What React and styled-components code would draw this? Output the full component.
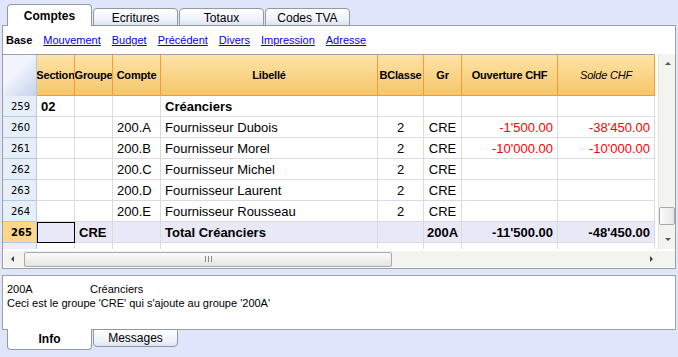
import React from 'react'
import styled, { createGlobalStyle } from 'styled-components'

const Global = createGlobalStyle`
  body {
    margin: 0;
    background: #dfe6fc;
    font-family: "Liberation Sans", Arial, sans-serif;
    font-size: 11px;
    color: #000;
  }
`

const Page = styled.div`
  width: 678px;
  height: 357px;
  display: flex;
  flex-direction: column;
  overflow: hidden;
`

const TabBar = styled.div`
  display: flex;
  align-items: flex-end;
  height: 26px;
  padding-left: 7px;
  position: relative;
  z-index: 2;
  margin-bottom: -1px;
`

const Tab = styled.div`
  width: 85px;
  height: ${p => (p.$active ? 22 : 18)}px;
  margin-right: 1px;
  box-sizing: border-box;
  border: 1px solid #919b9c;
  border-bottom: ${p => (p.$active ? 'none' : '1px solid #919b9c')};
  border-radius: 4px 4px 0 0;
  background: ${p => (p.$active ? '#fff' : 'linear-gradient(#ffffff, #ecf0fa 70%, #dde3f2)')};
  font-weight: ${p => (p.$active ? 'bold' : 'normal')};
  font-size: 12px;
  display: flex;
  align-items: center;
  justify-content: center;
  padding-top: ${p => (p.$active ? 0 : 1)}px;
`

const Panel = styled.div`
  margin: 0 2px;
  border: 1px solid #a0a0a0;
  background: #fff;
  height: 244px;
  box-sizing: border-box;
  display: flex;
  flex-direction: column;
`

const Links = styled.div`
  display: flex;
  align-items: center;
  gap: 11px;
  height: 28px;
  padding-left: 3px;
  font-size: 11px;
`

const Strong = styled.span`
  font-weight: bold;
`

const Link = styled.span`
  color: #0000ee;
  text-decoration: underline;
`

const GridArea = styled.div`
  display: flex;
  height: 195px;
`

const Table = styled.div`
  display: grid;
  grid-template-columns: 34px 38px 38px 48px 217px 46px 38px 96px 97px;
  grid-auto-rows: 21px;
  grid-template-rows: 41px;
  width: 655px;
  align-content: start;
  overflow: hidden;
  border-top: 1px solid #a0a0a0;
  box-sizing: border-box;
`

const Corner = styled.div`
  background: linear-gradient(135deg, #f1f4fd 40%, #c6d2ea);
  border-right: 1px solid #b8c6e0;
`

const Head = styled.div`
  background: linear-gradient(#fde3a7, #f6c66b);
  border-right: 1px solid #f39b35;
  border-bottom: 1px solid #f39b35;
  font-size: 11px;
  display: flex;
  align-items: center;
  justify-content: center;
  white-space: nowrap;
  overflow: hidden;
  font-style: ${p => (p.$italic ? 'italic' : 'normal')};
  font-weight: ${p => (p.$italic ? 'normal' : 'bold')};
  letter-spacing: -0.2px;
`

const RowNum = styled.div`
  background: ${p => (p.$sel ? '#fdd68a' : '#e6eef8')};
  border-bottom: 1px solid #b5c8e2;
  border-right: 1px solid #b5c8e2;
  font-size: 10px;
  font-weight: ${p => (p.$sel ? 'bold' : 'normal')};
  font-family: "DejaVu Sans", sans-serif;
  display: flex;
  align-items: center;
  padding-left: 8px;
  box-sizing: border-box;
`

const Cell = styled.div`
  background: ${p => (p.$total ? '#e8e8f6' : '#fff')};
  border-right: 1px solid #dcdcdc;
  border-bottom: 1px solid #dcdcdc;
  box-sizing: border-box;
  display: flex;
  align-items: center;
  justify-content: ${p => (p.$align === 'right' ? 'flex-end' : p.$align === 'center' ? 'center' : 'flex-start')};
  padding: 0 4px;
  font-size: 13px;
  font-weight: ${p => (p.$bold ? 'bold' : 'normal')};
  color: ${p => (p.$red ? '#ff0000' : '#000')};
  white-space: nowrap;
  overflow: hidden;
  ${p => p.$focus && 'outline: 1px solid #000; outline-offset: -1px;'}
`

const VScroll = styled.div`
  margin-left: 3px;
  width: 17px;
  background: #f3f3f0;
  border-left: 1px solid #e4e4e4;
  display: flex;
  flex-direction: column;
  align-items: center;
  padding-top: 153px;
  box-sizing: border-box;
  position: relative;
`

const Arrow = styled.div`
  width: 0;
  height: 0;
  border-left: 3px solid transparent;
  border-right: 3px solid transparent;
  ${p => (p.$up ? 'border-bottom: 3px solid #555;' : 'border-top: 3px solid #555;')}
  position: absolute;
  left: 6px;
  ${p => (p.$up ? 'top: 8px;' : 'bottom: 8px;')}
`

const SideArrow = styled.div`
  width: 0;
  height: 0;
  border-top: 3px solid transparent;
  border-bottom: 3px solid transparent;
  ${p => (p.$left ? 'border-right: 3px solid #444;' : 'border-left: 3px solid #444;')}
  position: absolute;
  top: 5px;
  ${p => (p.$left ? 'left: 7px;' : 'right: 22px;')}
`

const VThumb = styled.div`
  width: 16px;
  height: 18px;
  box-sizing: border-box;
  border: 1px solid #a8a8a8;
  border-radius: 2px;
  background: linear-gradient(90deg, #fbfbfb, #e6e6e6);
`

const HScroll = styled.div`
  margin: 2px 0 0 1px;
  height: 16px;
  background: #f3f3f0;
  position: relative;
  display: flex;
  align-items: center;
  padding-left: 20px;
`

const HThumb = styled.div`
  width: 368px;
  height: 15px;
  box-sizing: border-box;
  border: 1px solid #a8a8a8;
  border-radius: 2px;
  background: linear-gradient(#fbfbfb, #e4e4e4);
  display: flex;
  align-items: center;
  justify-content: center;
  gap: 2px;
`

const Grip = styled.span`
  width: 1px;
  height: 6px;
  background: #8a8a8a;
`

const Info = styled.div`
  margin: 6px 2px 0;
  height: 55px;
  border: 1px solid #a0a0a0;
  background: #fff;
  box-sizing: border-box;
  padding: 6px 4px;
  font-size: 11px;
  line-height: 14px;
  position: relative;
  z-index: 1;
`

const InfoLine = styled.div`
  display: flex;
`

const InfoKey = styled.span`
  width: 83px;
`

const BottomTabs = styled.div`
  display: flex;
  align-items: flex-start;
  padding-left: 7px;
  margin-top: -1px;
  position: relative;
  z-index: 2;
`

const BTab = styled.div`
  width: 85px;
  height: ${p => (p.$active ? 21 : 18)}px;
  margin-right: 1px;
  box-sizing: border-box;
  border: 1px solid #919b9c;
  border-top: ${p => (p.$active ? 'none' : '1px solid #919b9c')};
  border-radius: 0 0 4px 4px;
  background: ${p => (p.$active ? '#fff' : 'linear-gradient(#ffffff, #ecf0fa 70%, #dde3f2)')};
  font-weight: ${p => (p.$active ? 'bold' : 'normal')};
  font-size: 12px;
  display: flex;
  align-items: center;
  justify-content: center;
`

const rows = [
  { n: 259, section: '02', lib: 'Créanciers', bold: true },
  { n: 260, compte: '200.A', lib: 'Fournisseur Dubois', bc: '2', gr: 'CRE', ouv: '-1\'500.00', solde: '-38\'450.00', red: true },
  { n: 261, compte: '200.B', lib: 'Fournisseur Morel', bc: '2', gr: 'CRE', ouv: '-10\'000.00', solde: '-10\'000.00', red: true },
  { n: 262, compte: '200.C', lib: 'Fournisseur Michel', bc: '2', gr: 'CRE' },
  { n: 263, compte: '200.D', lib: 'Fournisseur Laurent', bc: '2', gr: 'CRE' },
  { n: 264, compte: '200.E', lib: 'Fournisseur Rousseau', bc: '2', gr: 'CRE' },
  { n: 265, groupe: 'CRE', lib: 'Total Créanciers', gr: '200A', ouv: '-11\'500.00', solde: '-48\'450.00', bold: true, total: true },
  { n: 266 },
]

export default function App() {
  return (
    <Page>
      <Global />
      <TabBar>
        <Tab $active>Comptes</Tab>
        <Tab>Ecritures</Tab>
        <Tab>Totaux</Tab>
        <Tab>Codes TVA</Tab>
      </TabBar>
      <Panel>
        <Links>
          <Strong>Base</Strong>
          <Link>Mouvement</Link>
          <Link>Budget</Link>
          <Link>Précédent</Link>
          <Link>Divers</Link>
          <Link>Impression</Link>
          <Link>Adresse</Link>
        </Links>
        <GridArea>
          <Table>
            <Corner />
            <Head>Section</Head>
            <Head>Groupe</Head>
            <Head>Compte</Head>
            <Head>Libellé</Head>
            <Head>BClasse</Head>
            <Head>Gr</Head>
            <Head>Ouverture CHF</Head>
            <Head $italic>Solde CHF</Head>
            {rows.map(r => (
              <React.Fragment key={r.n}>
                <RowNum $sel={r.total}>{r.n}</RowNum>
                <Cell $bold={r.bold} $total={r.total} $focus={r.total}>{r.section}</Cell>
                <Cell $bold={r.bold} $total={r.total}>{r.groupe}</Cell>
                <Cell $total={r.total}>{r.compte}</Cell>
                <Cell $bold={r.bold} $total={r.total}>{r.lib}</Cell>
                <Cell $align="center" $total={r.total}>{r.bc}</Cell>
                <Cell $align="center" $bold={r.bold} $total={r.total}>{r.gr}</Cell>
                <Cell $align="right" $red={r.red} $bold={r.bold} $total={r.total}>{r.ouv}</Cell>
                <Cell $align="right" $red={r.red} $bold={r.bold} $total={r.total}>{r.solde}</Cell>
              </React.Fragment>
            ))}
          </Table>
          <VScroll>
            <Arrow $up />
            <VThumb />
            <Arrow />
          </VScroll>
        </GridArea>
        <HScroll>
          <SideArrow $left />
          <HThumb>
            <Grip />
            <Grip />
            <Grip />
          </HThumb>
          <SideArrow />
        </HScroll>
      </Panel>
      <Info>
        <InfoLine>
          <InfoKey>200A</InfoKey>
          <span>Créanciers</span>
        </InfoLine>
        <InfoLine>Ceci est le groupe 'CRE' qui s'ajoute au groupe '200A'</InfoLine>
      </Info>
      <BottomTabs>
        <BTab $active>Info</BTab>
        <BTab>Messages</BTab>
      </BottomTabs>
    </Page>
  )
}
